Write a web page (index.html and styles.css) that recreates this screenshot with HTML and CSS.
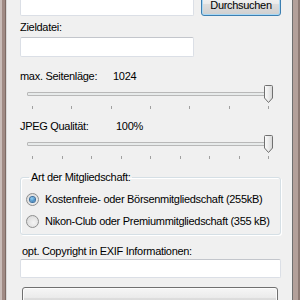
FILE: index.html
```html
<!DOCTYPE html>
<html lang="de">
<head>
	<meta charset="UTF-8">
	<title>Bildkonverter</title>
	<link rel="stylesheet" href="styles.css">
</head>
<body>
	<div class="window">
		<div class="frame frame-left"></div>
		<div class="client">
			<div class="row row-top">
				<input type="text" class="textbox short">
				<button class="btn btn-focus">Durchsuchen</button>
			</div>

			<div class="label label-ziel">Zieldatei:</div>
			<input type="text" class="textbox short">

			<div class="valrow valrow-size">
				<span class="vlabel w-size">max. Seitenläge:</span>
				<span class="value">1024</span>
			</div>
			<div class="slider">
				<div class="track"></div>
				<svg class="thumb" width="11" height="19" viewBox="0 0 11 19">
					<defs>
						<linearGradient id="tg" x1="0" y1="0" x2="1" y2="0">
							<stop offset="0" stop-color="#fbfbfb"/>
							<stop offset="0.5" stop-color="#ececec"/>
							<stop offset="1" stop-color="#d6d6d6"/>
						</linearGradient>
					</defs>
					<path d="M1.5 1.5 Q1.5 0.5 2.5 0.5 H8.5 Q9.5 0.5 9.5 1.5 V13 L5.5 17.5 L1.5 13 Z" fill="url(#tg)" stroke="#707070"/>
				</svg>
				<div class="ticks">
					<i></i><i></i><i></i><i></i><i></i><i></i><i></i>
				</div>
			</div>

			<div class="valrow valrow-jpeg">
				<span class="vlabel w-jpeg">JPEG Qualität:</span>
				<span class="value">100%</span>
			</div>
			<div class="slider">
				<div class="track"></div>
				<svg class="thumb" width="11" height="19" viewBox="0 0 11 19">
					<path d="M1.5 1.5 Q1.5 0.5 2.5 0.5 H8.5 Q9.5 0.5 9.5 1.5 V13 L5.5 17.5 L1.5 13 Z" fill="url(#tg)" stroke="#707070"/>
				</svg>
				<div class="ticks">
					<i></i><i></i><i></i><i></i><i></i><i></i><i></i><i></i><i></i>
				</div>
			</div>

			<fieldset class="group">
				<legend>Art der Mitgliedschaft:</legend>
				<div class="option">
					<span class="radio checked"></span>
					<span>Kostenfreie- oder Börsenmitgliedschaft (255kB)</span>
				</div>
				<div class="option">
					<span class="radio"></span>
					<span>Nikon-Club oder Premiummitgliedschaft (355 kB)</span>
				</div>
			</fieldset>

			<div class="label label-copy">opt. Copyright in EXIF Informationen:</div>
			<input type="text" class="textbox wide">

			<button class="btn btn-default"></button>
		</div>
		<div class="frame frame-right"></div>
	</div>
</body>
</html>
```

FILE: styles.css
```css
* {
	box-sizing:		border-box;
}

html, body {
	margin:			0;
	padding:		0;
	width:			300px;
	height:			300px;
	overflow:		hidden;
	background:		#f0f0f0;
}

body {
	font-family:		"Liberation Sans", Arial, sans-serif;
	font-size:		11px;
	letter-spacing:		-0.3px;
	color:			#000;
}

.window {
	display:		flex;
	height:			300px;
}

.frame {
	flex:			none;
	height:			100%;
}

.frame-left {
	width:			7px;
	border-left:		2px solid #c9bcb8;
	border-right:		1px solid #d8d8d8;
	background:		#a08b85;
	box-shadow:		inset -1px 0 #7d6a64;
}

.frame-right {
	width:			8px;
	border-left:		1px solid #6f6f6f;
	border-right:		2px solid #8d7a74;
	background:		#b3a09a;
}

.client {
	flex:			1;
	display:		flex;
	flex-direction:		column;
	padding-left:		13px;
}

.row-top {
	display:		flex;
	align-items:		flex-end;
	gap:			7px;
	margin-top:		-7px;
	height:			23px;
	flex:			none;
}

.textbox {
	display:		block;
	flex:			none;
	height:			20px;
	border:			1px solid #dbdfe6;
	border-top-color:	#c3c6cc;
	border-radius:		2px;
	background:		#fff;
	font:			inherit;
	padding:		0 3px;
	outline:		none;
}

.short {
	width:			174px;
}

.wide {
	width:			261px;
	height:			19px;
}

.btn {
	font:			inherit;
	letter-spacing:		inherit;
	color:			#000;
	height:			23px;
	flex:			none;
	border-radius:		3px;
	background:		linear-gradient(#f6f6f6, #ebebeb 45%, #dddddd 50%, #cfcfcf);
	padding:		0;
}

.btn-focus {
	width:			80px;
	border:			1px solid #3c7fb1;
	box-shadow:		inset 0 0 0 1px #a8d8f5;
}

.btn-default {
	width:			256px;
	margin-top:		9px;
	margin-left:		2px;
	border:			1px solid #707070;
	box-shadow:		inset 0 0 0 1px #fcfcfc;
}

.label {
	line-height:		13px;
	flex:			none;
}

.label-ziel {
	margin-top:		5px;
	margin-bottom:		3px;
}

.label-copy {
	margin-top:		10px;
	margin-bottom:		1px;
	padding-left:		2px;
}

.valrow {
	display:		flex;
	line-height:		13px;
	flex:			none;
}

.valrow-size {
	margin-top:		13px;
}

.valrow-jpeg {
	margin-top:		4px;
}

.w-size {
	width:			93px;
}

.w-jpeg {
	width:			96px;
}

.slider {
	position:		relative;
	flex:			none;
	width:			260px;
	height:			33px;
}

.track {
	position:		absolute;
	left:			7px;
	right:			8px;
	top:			9px;
	height:			4px;
	border:			1px solid #b8b8b8;
	border-radius:		1px;
	background:		#e7eaea;
}

.thumb {
	position:		absolute;
	left:			243px;
	top:			2px;
}

.ticks {
	position:		absolute;
	left:			12px;
	width:			237px;
	top:			23px;
	display:		flex;
	justify-content:	space-between;
}

.ticks i {
	display:		block;
	width:			1px;
	height:			3px;
	background:		#a0a0a0;
}

.group {
	flex:			none;
	width:			261px;
	margin:			5px 0 0 0;
	padding:		4px 0 2px 5px;
	border:			1px solid #d5dfe5;
	border-radius:		3px;
	box-shadow:		inset 1px 1px #fff, 1px 1px #fff;
}

.group legend {
	padding:		0 2px;
	margin-left:		3px;
	line-height:		13px;
}

.option {
	display:		flex;
	align-items:		center;
	gap:			6px;
	height:			22px;
	white-space:		nowrap;
}

.radio {
	flex:			none;
	width:			13px;
	height:			13px;
	border-radius:		50%;
	border:			1px solid #8e8f8f;
	background:		radial-gradient(circle at 60% 60%, #f4f4f4, #d4d4d4);
	display:		flex;
	align-items:		center;
	justify-content:	center;
}

.radio.checked::after {
	content:		"";
	width:			5px;
	height:			5px;
	border-radius:		50%;
	background:		radial-gradient(circle at 40% 35%, #8fd2f7, #1e5e9e);
	box-shadow:		0 0 0 1px #3a6f9f;
}
```
